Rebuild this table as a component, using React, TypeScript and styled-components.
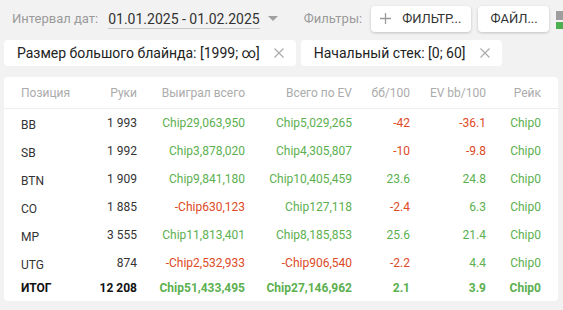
import React from 'react';
import styled, { createGlobalStyle } from 'styled-components';

const GlobalStyle = createGlobalStyle`
  body {
    margin: 0;
    background: #f2f2f2;
    font-family: Roboto, "Liberation Sans", sans-serif;
    color: #333;
  }
`;

const GREEN = '#5cb04f';
const RED = '#dd4a26';

const Page = styled.div`
  width: 563px;
  height: 310px;
  overflow: hidden;
  padding: 5px 5px 0 4px;
  box-sizing: border-box;
`;

const TopBar = styled.div`
  display: flex;
  align-items: center;
  height: 27px;
  padding-left: 8px;
  white-space: nowrap;
`;

const Label = styled.span<{ $gap: number }>`
  font-size: 13px;
  color: #9a9a9a;
  margin-right: ${(p) => p.$gap}px;
`;

const DateValue = styled.span`
  font-size: 14px;
  color: #333;
  border-bottom: 1px solid #c8c8c8;
  line-height: 17px;
  margin-top: 2px;
`;

const Caret = styled.span`
  width: 0;
  height: 0;
  border-left: 5px solid transparent;
  border-right: 5px solid transparent;
  border-top: 5px solid #a0a0a0;
  margin: 0 26px 0 8px;
`;

const Button = styled.button<{ $pl: number; $pr: number }>`
  display: flex;
  align-items: center;
  gap: 11px;
  height: 26px;
  padding: 0 ${(p) => p.$pr}px 0 ${(p) => p.$pl}px;
  margin-right: 7px;
  border: none;
  border-radius: 4px;
  background: #fff;
  box-shadow: 0 1px 3px rgba(0, 0, 0, 0.2);
  font-family: Roboto, "Liberation Sans", sans-serif;
  font-size: 13px;
  color: #333;
  text-transform: uppercase;
  flex-shrink: 0;
`;

const CutIcon = styled.div`
  display: flex;
  flex-direction: column;
  gap: 2px;
  flex-shrink: 0;
  width: 8px;
  margin-top: 2px;
`;

const CutPart = styled.div<{ $color: string; $h: number }>`
  height: ${(p) => p.$h}px;
  background: ${(p) => p.$color};
`;

const ChipRow = styled.div`
  display: flex;
  gap: 5px;
  margin-top: 8px;
`;

const Chip = styled.div`
  display: flex;
  align-items: center;
  gap: 14px;
  height: 26px;
  padding: 0 12px 0 13px;
  background: #fff;
  border-radius: 4px;
  font-size: 14px;
  color: #222;
`;

const Card = styled.div`
  margin-top: 11px;
  background: #fff;
  border-radius: 4px;
  padding: 0 17px 2px 17px;
`;

const Row = styled.div<{ $head?: boolean; $total?: boolean }>`
  display: grid;
  grid-template-columns: 59px 57px 108px 107px 58px 76px 55px;
  align-items: center;
  height: ${(p) => (p.$head ? 31 : p.$total ? 22 : 28)}px;
  font-size: 12px;
  font-weight: ${(p) => (p.$total ? 700 : 400)};
  border-bottom: ${(p) => (p.$head ? '1px solid #eeeeee' : 'none')};
  margin: ${(p) => (p.$head ? '0 -17px' : '0')};
  padding: ${(p) => (p.$head ? '0 17px' : '0')};
`;

const Cell = styled.div<{ $color?: string; $left?: boolean; $drop?: boolean }>`
  text-align: ${(p) => (p.$left ? 'left' : 'right')};
  color: ${(p) => p.$color || 'inherit'};
  white-space: nowrap;
  padding-top: ${(p) => (p.$drop ? 3 : 0)}px;
`;

const HeadCell = styled(Cell)`
  color: #ababab;
`;

const Close = () => (
  <svg width="10" height="10" viewBox="0 0 10 10">
    <path d="M0.5 0.5L9.5 9.5M9.5 0.5L0.5 9.5" stroke="#ababab" strokeWidth="1.2" />
  </svg>
);

const Plus = () => (
  <svg width="11" height="11" viewBox="0 0 11 11">
    <path d="M5.5 0V11M0 5.5H11" stroke="#9a9a9a" strokeWidth="1.3" />
  </svg>
);

const headers = ['Позиция', 'Руки', 'Выиграл всего', 'Всего по EV', 'бб/100', 'EV bb/100', 'Рейк'];

const rows = [
  ['BB', '1 993', 'Chip29,063,950', 'Chip5,029,265', '-42', '-36.1', 'Chip0'],
  ['SB', '1 992', 'Chip3,878,020', 'Chip4,305,807', '-10', '-9.8', 'Chip0'],
  ['BTN', '1 909', 'Chip9,841,180', 'Chip10,405,459', '23.6', '24.8', 'Chip0'],
  ['CO', '1 885', '-Chip630,123', 'Chip127,118', '-2.4', '6.3', 'Chip0'],
  ['MP', '3 555', 'Chip11,813,401', 'Chip8,185,853', '25.6', '21.4', 'Chip0'],
  ['UTG', '874', '-Chip2,532,933', '-Chip906,540', '-2.2', '4.4', 'Chip0'],
];

const total = ['ИТОГ', '12 208', 'Chip51,433,495', 'Chip27,146,962', '2.1', '3.9', 'Chip0'];

const colorFor = (i: number, v: string, isTotal: boolean) => {
  if (i < 2) return isTotal ? '#111' : '#333';
  return v.startsWith('-') ? RED : GREEN;
};

export default function App() {
  return (
    <>
      <GlobalStyle />
      <Page>
        <TopBar>
          <Label $gap={10}>Интервал дат:</Label>
          <DateValue>01.01.2025 - 01.02.2025</DateValue>
          <Caret />
          <Label $gap={9}>Фильтры:</Label>
          <Button $pl={9} $pr={10}>
            <Plus />
            Фильтр...
          </Button>
          <Button $pl={12} $pr={11}>Файл...</Button>
          <CutIcon>
            <CutPart $color="#9e9e9e" $h={9} />
            <CutPart $color="#4caf50" $h={7} />
          </CutIcon>
        </TopBar>
        <ChipRow>
          <Chip>
            Размер большого блайнда: [1999; ∞]
            <Close />
          </Chip>
          <Chip>
            Начальный стек: [0; 60]
            <Close />
          </Chip>
        </ChipRow>
        <Card>
          <Row $head>
            {headers.map((h, i) => (
              <HeadCell key={h} $left={i === 0}>
                {h}
              </HeadCell>
            ))}
          </Row>
          {rows.map((r) => (
            <Row key={r[0]}>
              {r.map((v, i) => (
                <Cell key={i} $left={i === 0} $drop={i === 0} $color={colorFor(i, v, false)}>
                  {v}
                </Cell>
              ))}
            </Row>
          ))}
          <Row $total>
            {total.map((v, i) => (
              <Cell key={i} $left={i === 0} $color={colorFor(i, v, true)}>
                {v}
              </Cell>
            ))}
          </Row>
        </Card>
      </Page>
    </>
  );
}
